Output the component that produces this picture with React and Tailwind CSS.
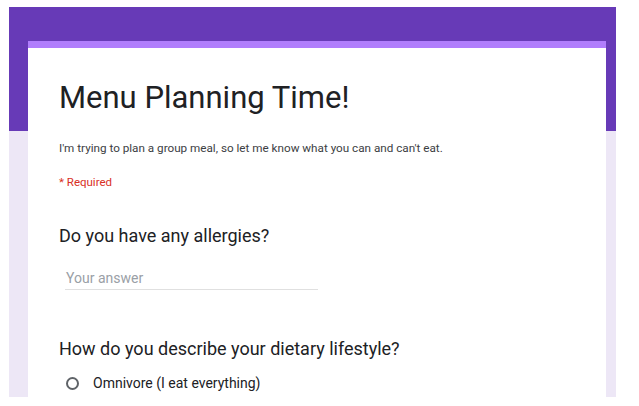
export default function App() {
  return (
    <div className="w-[639px] h-[406px] bg-white pt-[7px] pl-[9px] font-['Roboto',sans-serif] overflow-hidden">
      <div className="w-[607px] h-[390px] bg-[linear-gradient(#673ab7_0_124px,#ede7f6_124px)] pl-[19px] pr-[10px] pt-[34px] overflow-hidden">
        <div className="h-full bg-white border-t-[7px] border-[#b07dfc] pl-[31px] pt-[31px]">
          <h1 className="text-[31px] leading-[38px] text-[#202124]">Menu Planning Time!</h1>
          <p className="mt-[23px] text-[11.7px] leading-[16px] text-[#3c4043]">
            I'm trying to plan a group meal, so let me know what you can and can't eat.
          </p>
          <p className="mt-[18px] text-[11.5px] leading-[16px] text-[#d93025]">* Required</p>
          <h2 className="mt-[34px] text-[18px] leading-[24px] text-[#202124]">Do you have any allergies?</h2>
          <div className="mt-[20px] ml-[6px] w-[253px] border-b border-[#e0e0e0] pb-[1px]">
            <span className="block text-[14px] leading-[20px] text-[#9aa0a6] pl-[1px]">Your answer</span>
          </div>
          <h2 className="mt-[47px] text-[18px] leading-[24px] text-[#202124]">How do you describe your dietary lifestyle?</h2>
          <label className="mt-[12px] ml-[7px] flex items-center gap-[14px] h-[20px]">
            <span className="w-[13px] h-[13px] rounded-full border-2 border-[#5f6368]" />
            <span className="text-[14px] text-[#202124]">Omnivore (I eat everything)</span>
          </label>
        </div>
      </div>
    </div>
  )
}
